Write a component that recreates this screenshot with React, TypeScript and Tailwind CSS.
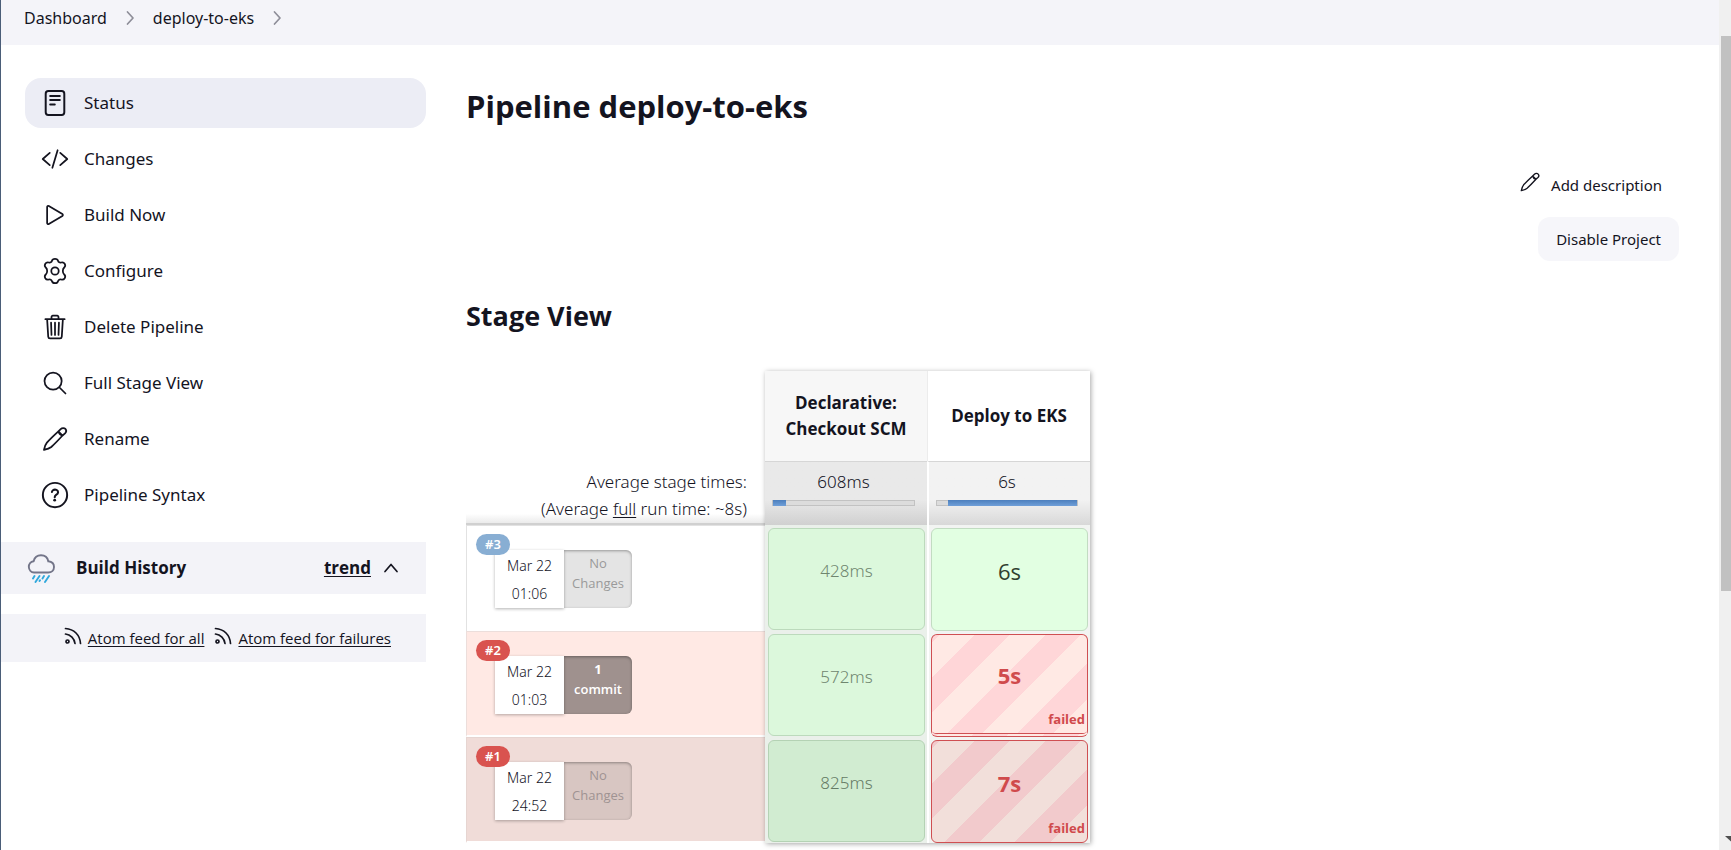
import React from "react";

type IconName = "status" | "changes" | "build" | "configure" | "delete" | "search" | "rename" | "help";

const stroke = {
  fill: "none",
  stroke: "currentColor",
  strokeLinecap: "round" as const,
  strokeLinejoin: "round" as const,
  strokeWidth: 32,
};

function Pencil({ className }: { className: string }) {
  return (
    <svg viewBox="0 0 512 512" className={className} aria-hidden="true" {...stroke}>
      <path d="M318 116C250 178 170 254 108 322c-26 30-42 72-54 134 62-12 104-28 134-54 68-62 144-142 206-210M318 116l42-42c24-22 66-24 86-2 20 22 18 56-6 80l-46 40zM318 116c10 42 34 66 76 76" />
    </svg>
  );
}

function Icon({ name }: { name: IconName }) {
  const cls = "size-7 shrink-0";
  if (name === "rename") return <Pencil className={cls} />;
  return (
    <svg viewBox="0 0 512 512" className={cls} aria-hidden="true" {...stroke}>
      {name === "status" && (
        <>
          <rect x="86" y="38" width="340" height="436" rx="48" strokeWidth="36" />
          <path d="M168 126h176M168 202h176M168 282h84" strokeWidth="36" />
        </>
      )}
      {name === "changes" && <path d="M160 368 32 256l128-112M352 368l128-112-128-112M304 96l-96 320" />}
      {name === "build" && (
        <path d="M112 111v290c0 17.44 17 28.52 31 20.16l247.9-148.37c12.12-7.25 12.12-26.33 0-33.58L143 90.84c-14-8.36-31 2.72-31 20.16z" />
      )}
      {name === "configure" && (
        <>
          <circle cx="256" cy="256" r="68" />
          <path d="M256 34c36 0 50 10 55 34 6 26 32 40 58 32 28-8 46-6 64 24 18 32 14 50-8 68-20 18-26 40-26 64s6 46 26 64c22 18 26 36 8 68-18 30-36 32-64 24-26-8-52 6-58 32-5 24-19 34-55 34s-50-10-55-34c-6-26-32-40-58-32-28 8-46 6-64-24-18-32-14-50 8-68 20-18 26-40 26-64s-6-46-26-64c-22-18-26-36-8-68 18-30 36-32 64-24 26 8 52-6 58-32 5-24 19-34 55-34z" />
        </>
      )}
      {name === "delete" && (
        <path d="m112 112 20 320c.95 18.49 14.4 32 32 32h184c17.67 0 30.87-13.51 32-32l20-320M80 112h352M192 112V72a23.93 23.93 0 0 1 24-24h80a23.93 23.93 0 0 1 24 24v40M256 176v224M184 176l8 224M328 176l-8 224" />
      )}
      {name === "search" && <path d="M221.09 64a157.09 157.09 0 1 0 157.09 157.09A157.1 157.1 0 0 0 221.09 64zM338.29 338.29 448 448" />}
      {name === "help" && (
        <>
          <circle cx="256" cy="256" r="222" strokeWidth="36" />
          <path strokeWidth="38" d="M200 202.29s.84-17.5 19.57-32.57C230.68 160.77 244 158.18 256 158c10.93-.14 20.69 1.67 26.53 4.45 10 4.76 29.47 16.38 29.47 41.09 0 26-17 37.81-36.37 50.8S251 281.43 251 296" />
          <circle cx="250" cy="350" r="26" fill="currentColor" stroke="none" />
        </>
      )}
    </svg>
  );
}

function Chevron({ className, d }: { className: string; d: string }) {
  return (
    <svg viewBox="0 0 16 16" className={className} aria-hidden="true">
      <path d={d} fill="none" stroke="currentColor" strokeWidth="1.7" strokeLinecap="round" strokeLinejoin="round" />
    </svg>
  );
}

function Feed() {
  return (
    <svg viewBox="0 0 18 18" className="mb-1 size-[18px] shrink-0" aria-hidden="true" fill="none" stroke="currentColor" strokeWidth="1.7" strokeLinecap="round">
      <path d="M1.500 1.500C10 2 16 8 16.500 16.500M1.500 7C6.500 7.500 10.500 11.500 11 16.500" />
      <circle cx="3.500" cy="14.500" r="1.500" />
    </svg>
  );
}

function RainCloud() {
  return (
    <svg viewBox="0 0 28 29" className="h-[29px] w-7 shrink-0" aria-hidden="true" fill="none" strokeLinecap="round">
      <path d="M7 18.500a5.700 5.700 0 0 1-.4-11.300C7.500 3.600 10.400 1.300 14 1.300s6.600 2.300 7.300 6c3.300.3 5.700 2.500 5.700 5.600 0 3.300-2.500 5.600-5.800 5.600z" stroke="#737589" strokeWidth="1.900" />
      <path d="m7.500 22-1.500 2.500M12.500 22l-4 6M17 22l-1.500 2.500M22 22l-4 6M12.500 27l.5-.8" stroke="#2fa8dc" strokeWidth="1.900" />
    </svg>
  );
}

const tasks: { label: string; icon: IconName }[] = [
  { label: "Status", icon: "status" },
  { label: "Changes", icon: "changes" },
  { label: "Build Now", icon: "build" },
  { label: "Configure", icon: "configure" },
  { label: "Delete Pipeline", icon: "delete" },
  { label: "Full Stage View", icon: "search" },
  { label: "Rename", icon: "rename" },
  { label: "Pipeline Syntax", icon: "help" },
];

const stages = [
  {
    name: "Declarative: Checkout SCM",
    avg: "608ms",
    start: 0,
    width: 9,
    head: "bg-[#f7f7f7]",
    average: "bg-linear-to-b from-[#e9e9e9] from-60% to-[#d0d0d0]",
  },
  {
    name: "Deploy to EKS",
    avg: "6s",
    start: 8,
    width: 92,
    head: "bg-white border-l border-[#ececec]",
    average: "border-l-2 border-l-white bg-linear-to-b from-[#f2f2f2] from-60% to-[#d8d8d8]",
  },
];

const runs = [
  {
    id: "#3",
    time: "01:06",
    commits: 0,
    failed: false,
    checkout: "428ms",
    deploy: "6s",
    row: "bg-white border-[#e2e2e2]",
    badge: "bg-[#88aed3]",
    box: "bg-[#e4e4e4] text-[#9a9a9a]",
    cell: "border-[#bcdabc] bg-[#dcf8dc] text-[#6f866f]",
    deployCell: "border-[#c2dcc2] bg-[#e2ffe2] text-[#2f402f]",
  },
  {
    id: "#2",
    time: "01:03",
    commits: 1,
    failed: true,
    checkout: "572ms",
    deploy: "5s",
    row: "bg-[#ffe9e4] border-[#ecdedb] border-b-2 border-b-white",
    badge: "bg-[#d9534f]",
    box: "bg-[#9f918e] text-white",
    cell: "border-[#bcdabc] bg-[#dcf8dc] text-[#6f866f]",
    deployCell:
      "border-[#cf4f52] [border-bottom:4px_double_#cf4f52] text-[#d04a4c] bg-[repeating-linear-gradient(135deg,#ffd6d8_0_5px,#ffe9e4_5px_30px,#ffd6d8_30px_50px)]",
  },
  {
    id: "#1",
    time: "24:52",
    commits: 0,
    failed: true,
    checkout: "825ms",
    deploy: "7s",
    row: "bg-[#f0dcd8] border-[#e6d5d1] border-b-2 border-b-white",
    badge: "bg-[#d9534f]",
    box: "bg-[#d8c6c2] text-[#9f9392]",
    cell: "border-[#b4d2b4] bg-[#d1ecd1] text-[#657b65]",
    deployCell:
      "border-[#cf4f52] text-[#d04a4c] bg-[repeating-linear-gradient(135deg,#f2cacc_0_5px,#f2dfda_5px_30px,#f2cacc_30px_50px)]",
  },
];

function StageTable() {
  return (
    <div className="relative w-max">
      <table className="table-fixed border-separate border-spacing-0">
        <colgroup>
          <col className="w-[299px]" />
          <col className="w-[162px]" />
          <col className="w-[163px]" />
        </colgroup>
        <thead>
          <tr className="h-[90px]">
            <td />
            {stages.map((s) => (
              <th key={s.name} scope="col" className={"px-4 font-['Open_Sans'] text-[17px] leading-[26px] font-bold " + s.head}>
                {s.name}
              </th>
            ))}
          </tr>
          <tr className="h-16 align-top text-[17px] leading-[27px] font-light">
            <td className="border-b-2 border-[#d0d0d0] bg-linear-to-b from-white from-85% to-[#ebebeb] pt-[7px] pr-[18px] text-right whitespace-nowrap">
              <p>Average stage times:</p>
              <p>(Average <span className="underline underline-offset-2">full</span> run time: ~8s)</p>
            </td>
            {stages.map((s) => (
              <td key={s.name} className={"border-t border-t-[#d6d6d6] pt-1.5 pr-3 pl-[7px] text-center " + s.average}>
                <p>{s.avg}</p>
                <div className="mt-[5px] h-1.5 border border-[#c2c2c2] bg-[#dcdcdc]">
                  <div
                    className="-my-px h-1.5 bg-linear-to-b from-[#4c7fbd] to-[#6f9fd8]"
                    style={{ marginLeft: `${s.start}%`, width: `${s.width}%` }}
                  />
                </div>
              </td>
            ))}
          </tr>
        </thead>
        <tbody>
          {runs.map((r) => (
            <tr key={r.id} className="h-[106px] align-top">
              <td className={"border-t border-l bg-clip-padding p-0 pt-6 pl-7 " + r.row}>
                <div className="relative flex w-max text-center">
                  <span className={"absolute -top-4 -left-[19px] z-10 flex h-[21px] items-center rounded-full px-[9px] text-[13px] font-semibold text-white " + r.badge}>
                    {r.id}
                  </span>
                  <div className="h-[58px] w-[69px] bg-white pt-0.5 text-[14px] leading-7 font-light shadow-[0_1px_3px_rgba(0,0,0,0.3)]">
                    <p>Mar 22</p>
                    <p>{r.time}</p>
                  </div>
                  <div className={"h-[58px] w-[68px] rounded-r-md pt-[3px] font-['Open_Sans'] text-[13px] leading-5 inset-shadow-[0_1px_3px_rgba(0,0,0,0.35)] " + r.box}>
                    {r.commits ? (
                      <>
                        <p className="font-bold">{r.commits}</p>
                        <p className="font-semibold">commit</p>
                      </>
                    ) : (
                      <p>No<br />Changes</p>
                    )}
                  </div>
                </div>
              </td>
              <td className="bg-[#eaf0ea] p-0 pt-[3px] pr-0.5 pl-[3px]">
                <div className={"flex h-[102px] items-center justify-center rounded-md border pb-[17px] text-[17px] font-light " + r.cell}>
                  {r.checkout}
                </div>
              </td>
              <td className="border-l-2 border-white bg-[#f2f4f2] p-0 px-0.5 pt-[3px]">
                <div
                  className={
                    "relative flex h-[103px] items-center justify-center rounded-md border pb-[17px] font-['Open_Sans'] text-[22px] " +
                    (r.failed ? "font-bold " : "font-normal ") +
                    r.deployCell
                  }
                >
                  {r.deploy}
                  {r.failed && <span className="absolute right-0.5 bottom-1 text-[13px] leading-5">failed</span>}
                </div>
              </td>
            </tr>
          ))}
        </tbody>
      </table>
      <div className="pointer-events-none absolute inset-y-0 right-0 w-[325px] shadow-[1px_1px_5px_rgba(0,0,0,0.35)]" />
    </div>
  );
}

export default function App() {
  return (
    <div className="flex h-screen overflow-hidden border-l border-[#4a5d78] bg-white font-['Noto_Sans','Open_Sans',sans-serif] text-[#14141f]">
      <div className="flex min-w-0 flex-1 flex-col">
        <nav aria-label="Breadcrumb" className="flex h-[45px] shrink-0 items-center gap-[15px] bg-[#f4f4f9] pb-2.5 pl-[23px] text-base">
          <a href="#dashboard">Dashboard</a>
          <Chevron className="size-4 text-[#8e8e99]" d="M5.500 2 11 8l-5.500 6" />
          <a href="#job">deploy-to-eks</a>
          <Chevron className="size-4 text-[#8e8e99]" d="M5.500 2 11 8l-5.500 6" />
        </nav>

        <div className="flex flex-1">
          <aside className="w-[425px] shrink-0 pt-[33px]">
            <nav aria-label="Tasks" className="flex flex-col gap-1.5 pl-6 text-[17px]">
              {tasks.map((t, i) => (
                <a key={t.label} href="#task" className={"flex h-[50px] items-center gap-[15px] rounded-2xl pl-4 " + (i === 0 ? "bg-[#ecedf5]" : "")}>
                  <Icon name={t.icon} />
                  {t.label}
                </a>
              ))}
            </nav>
            <div className="mt-[22px] flex h-[52px] items-center bg-[#f3f3f8] pr-[27px] pl-[26px] text-[17px] font-bold">
              <RainCloud />
              <h2 className="ml-[21px] flex-1 font-['Open_Sans']">Build History</h2>
              <a href="#trend" className="font-['Open_Sans'] underline underline-offset-2">trend</a>
              <button type="button" aria-label="Collapse build history" className="ml-3">
                <Chevron className="size-4" d="M2 11.500 8 4.500l6 7" />
              </button>
            </div>
            <div className="mt-5 flex h-12 items-center justify-end gap-2.5 bg-[#f3f3f8] pr-[35px] font-['Open_Sans'] text-[15px]">
              <a href="#all" className="flex items-center gap-1.5"><Feed /><span className="underline underline-offset-2">Atom feed for all</span></a>
              <a href="#failures" className="flex items-center gap-1.5"><Feed /><span className="underline underline-offset-2">Atom feed for failures</span></a>
            </div>
          </aside>

          <main className="min-w-0 flex-1 px-10 pt-10">
            <h1 className="font-['Open_Sans'] text-[31px] leading-[42px] font-bold">Pipeline deploy-to-eks</h1>
            <div className="mt-[34px] flex flex-col items-end gap-2 text-[15px]">
              <a href="#description" className="flex h-12 items-center gap-2.5 pr-[17px]">
                <Pencil className="mb-1.5 size-[22px]" />
                Add description
              </a>
              <button type="button" className="h-11 rounded-xl bg-[#f6f6fa] px-[18px]">Disable Project</button>
            </div>
            <h2 className="mt-[35px] font-['Open_Sans'] text-[27px] leading-10 font-bold">Stage View</h2>
            <div className="mt-[35px]">
              <StageTable />
            </div>
          </main>
        </div>
      </div>

      <div aria-hidden="true" className="flex w-3 shrink-0 flex-col bg-[#f0f0f0] pt-9 pb-2 pl-0.5">
        <div className="h-[555px] bg-[#c1c1c1]" />
        <svg viewBox="0 0 10 6" className="mt-auto h-1.5 w-2.5" fill="#505050">
          <path d="M4 0h6v5.500z" />
        </svg>
      </div>
    </div>
  );
}
